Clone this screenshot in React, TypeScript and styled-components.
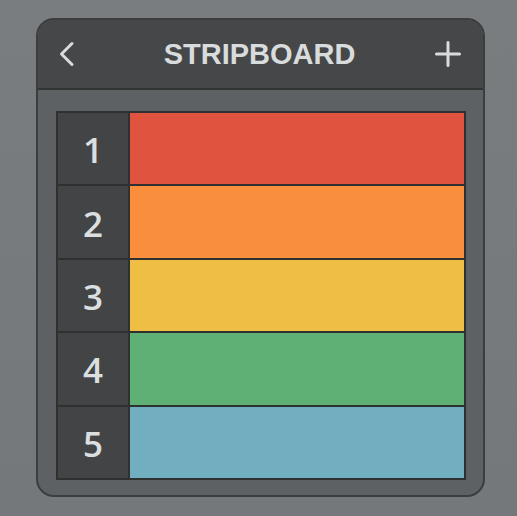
import React from "react";
import styled, { createGlobalStyle } from "styled-components";

const Global = createGlobalStyle`
  html, body { margin: 0; padding: 0; }
  body {
    background: #787b7e;
    font-family: "Liberation Sans", Arial, sans-serif;
  }
`;

const Page = styled.div`
  width: 517px;
  height: 516px;
  box-sizing: border-box;
  padding: 18px 32px 19px 36px;
  background: linear-gradient(180deg, #7a7d80 0%, #75787b 100%);
`;

const Panel = styled.div`
  box-sizing: border-box;
  width: 449px;
  height: 479px;
  border: 2px solid #3b3d3e;
  border-radius: 18px;
  background: #5e6164;
  overflow: hidden;
  display: flex;
  flex-direction: column;
`;

const Header = styled.div`
  height: 68px;
  flex: none;
  background: #464748;
  border-bottom: 2px solid #333535;
  display: flex;
  align-items: center;
  justify-content: space-between;
  padding: 0 22px 0 20px;
`;

const IconButton = styled.button`
  all: unset;
  width: 26px;
  height: 26px;
  display: flex;
  align-items: center;
  justify-content: center;
  color: #d9dcdd;
`;

const Title = styled.h1`
  margin: 0;
  font-size: 29px;
  font-weight: 700;
  letter-spacing: 0px;
  color: #d9dcdd;
  line-height: 1;
`;

const Body = styled.div`
  flex: 1;
  padding: 21px 17px 15px 18px;
`;

const Table = styled.div`
  box-sizing: border-box;
  height: 369px;
  border: 2px solid #2f3131;
  background: #2f3131;
  display: flex;
  flex-direction: column;
  gap: 2px;
`;

const Row = styled.div`
  flex: 1;
  display: flex;
  gap: 2px;
`;

const Num = styled.div`
  width: 70px;
  flex: none;
  background: #434445;
  color: #dcdfe0;
  font-family: "Open Sans", "Liberation Sans", sans-serif;
  font-size: 35px;
  font-weight: 600;
  display: flex;
  align-items: center;
  justify-content: center;
  padding-top: 2px;
  box-sizing: border-box;
`;

const Strip = styled.div<{ $c: string }>`
  flex: 1;
  background: ${(p) => p.$c};
`;

const strips = ["#e0533f", "#f98f3d", "#eebe45", "#5fb074", "#70aec0"];

export default function App() {
  return (
    <>
      <Global />
      <Page>
        <Panel>
          <Header>
            <IconButton aria-label="Back">
              <svg width="26" height="26" viewBox="0 0 26 26">
                <path d="M14 2.5 L3.5 13 L14 23.5" fill="none" stroke="currentColor" strokeWidth="3" strokeLinecap="round" strokeLinejoin="round" />
              </svg>
            </IconButton>
            <Title>STRIPBOARD</Title>
            <IconButton aria-label="Add">
              <svg width="26" height="26" viewBox="0 0 26 26">
                <path d="M13 1.5 V24.5 M1.5 13 H24.5" fill="none" stroke="currentColor" strokeWidth="3" strokeLinecap="round" />
              </svg>
            </IconButton>
          </Header>
          <Body>
            <Table>
              {strips.map((c, i) => (
                <Row key={i}>
                  <Num>{i + 1}</Num>
                  <Strip $c={c} />
                </Row>
              ))}
            </Table>
          </Body>
        </Panel>
      </Page>
    </>
  );
}
